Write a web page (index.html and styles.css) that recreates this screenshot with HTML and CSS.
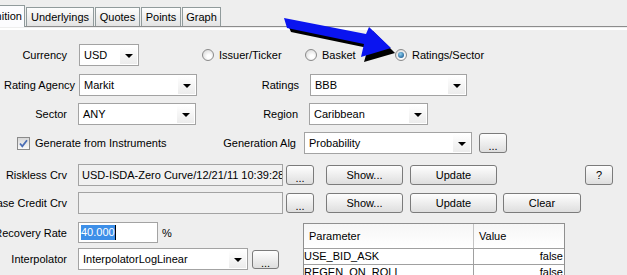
FILE: index.html
```html
<!DOCTYPE html>
<html lang="en">

<head>
    <link rel="stylesheet" href="styles.css">
</head>

<body>
    <div class="tabs">
        <div class="tab tab-selected">Definition</div>
        <div class="tab tab-underlyings">Underlyings</div>
        <div class="tab tab-quotes">Quotes</div>
        <div class="tab tab-points">Points</div>
        <div class="tab tab-graph">Graph</div>
    </div>
    <div class="panel">
        <div class="row row-1">
            <div class="lbl">Currency</div>
            <div class="combo combo-currency"><span class="combo-text">USD</span><span class="combo-btn"></span></div>
            <div class="radios">
                <div class="radio-item radio-issuer"><span class="radio"></span>Issuer/Ticker</div>
                <div class="radio-item radio-basket"><span class="radio"></span>Basket</div>
                <div class="radio-item"><span class="radio radio-on"></span>Ratings/Sector</div>
            </div>
        </div>
        <div class="row row-2">
            <div class="lbl lbl-wide">Rating Agency</div>
            <div class="combo combo-left"><span class="combo-text">Markit</span><span class="combo-btn"></span></div>
            <div class="lbl lbl-right">Ratings</div>
            <div class="combo combo-ratings"><span class="combo-text">BBB</span><span class="combo-btn"></span></div>
        </div>
        <div class="row row-3">
            <div class="lbl">Sector</div>
            <div class="combo combo-left"><span class="combo-text">ANY</span><span class="combo-btn"></span></div>
            <div class="lbl lbl-right">Region</div>
            <div class="combo combo-region"><span class="combo-text">Caribbean</span><span class="combo-btn"></span></div>
        </div>
        <div class="row row-4">
            <div class="check-group">
                <span class="checkbox">
                    <svg width="11" height="11" viewBox="0 0 11 11"><path d="M2 5.5 L4.3 8.3 L9 2.2" fill="none" stroke="#4a6db5" stroke-width="1.8"/></svg>
                </span>
                Generate from Instruments
            </div>
            <div class="lbl lbl-alg">Generation Alg</div>
            <div class="combo combo-alg"><span class="combo-text">Probability</span><span class="combo-btn"></span></div>
            <button class="btn btn-dots btn-alg">...</button>
        </div>
        <div class="row row-5">
            <div class="lbl">Riskless Crv</div>
            <div class="field field-curve">USD-ISDA-Zero Curve/12/21/11 10:39:28</div>
            <button class="btn btn-dots">...</button>
            <button class="btn btn-show">Show...</button>
            <button class="btn btn-update">Update</button>
            <button class="btn btn-help">?</button>
        </div>
        <div class="row row-6">
            <div class="lbl">Base Credit Crv</div>
            <div class="field field-curve"></div>
            <button class="btn btn-dots">...</button>
            <button class="btn btn-show">Show...</button>
            <button class="btn btn-update">Update</button>
            <button class="btn btn-clear">Clear</button>
        </div>
        <div class="bottom">
            <div class="bottom-left">
                <div class="row row-7">
                    <div class="lbl">Recovery Rate</div>
                    <div class="field field-rate"><span class="sel">40.000</span><span class="caret"></span></div>
                    <span class="pct">%</span>
                </div>
                <div class="row row-8">
                    <div class="lbl">Interpolator</div>
                    <div class="combo combo-interp"><span class="combo-text">InterpolatorLogLinear</span><span class="combo-btn"></span></div>
                    <button class="btn btn-dots btn-interp">...</button>
                </div>
            </div>
            <div class="params">
                <div class="params-head">
                    <div class="col-name">Parameter</div>
                    <div class="col-value">Value</div>
                </div>
                <div class="params-row">
                    <div class="col-name">USE_BID_ASK</div>
                    <div class="col-value">false</div>
                </div>
                <div class="params-row">
                    <div class="col-name">REGEN_ON_ROLL</div>
                    <div class="col-value">false</div>
                </div>
            </div>
        </div>
    </div>
    <!-- annotation arrow drawn over the screenshot -->
    <svg class="arrow" width="627" height="275" viewBox="0 0 627 275">
        <polygon points="287,23 369,38 373,31 395,53 364,62 368,48 291,32" fill="#000"/>
        <polygon points="284,18 366,34 369,27 391,48 361,57 364,44 287,28" fill="#0a14f0"/>
    </svg>
</body>

</html>
```

FILE: styles.css
```css
body {
    margin: 0;
    width: 627px;
    height: 275px;
    overflow: hidden;
    position: relative;
    background: #eeeeee;
    font-family: "Liberation Sans", Arial, sans-serif;
    font-size: 11px;
    color: #000;
}

/* tab strip */
.tabs {
    display: flex;
    align-items: flex-end;
    height: 26px;
    border-bottom: 1px solid #8c8c8c;
    margin-left: -27px;
}

.tab {
    height: 18px;
    line-height: 18px;
    border: 1px solid #919b9c;
    border-bottom: none;
    background: linear-gradient(#fdfdfd, #e3e3e3);
    text-align: center;
    margin-right: 1px;
    box-sizing: content-box;
}

.tab-selected {
    width: 50px;
    height: 21px;
    line-height: 21px;
    margin-bottom: -1px;
    background: #fcfcfe;
    border-color: #919b9c;
}

.tab-underlyings {
    width: 66px;
}

.tab-quotes {
    width: 43px;
}

.tab-points {
    width: 38px;
}

.tab-graph {
    width: 37px;
}

.panel {
    margin-top: 1px;
    border-top: 2px solid #fff;
    padding-top: 14px;
}

/* rows */
.row {
    display: flex;
    align-items: center;
    height: 22px;
}

.row-2 {
    margin-top: 8px;
}

.row-3,
.row-4 {
    margin-top: 7px;
}

.row-5 {
    margin-top: 10px;
}

.row-6 {
    margin-top: 6px;
}

.bottom {
    display: flex;
    margin-top: 8px;
}

.row-7 {
    height: 21px;
}

.row-8 {
    margin-top: 5px;
}

.lbl {
    width: 67px;
    flex-shrink: 0;
    display: flex;
    justify-content: flex-end;
    white-space: nowrap;
    margin-right: 11px;
}

.lbl-wide {
    width: 75px;
    margin-right: 4px;
}

.lbl-right {
    width: 102px;
    margin-right: 11px;
}

.lbl-alg {
    width: 99px;
    margin-right: 8px;
}

/* combo boxes */
.combo {
    display: flex;
    height: 22px;
    box-sizing: border-box;
    border: 1px solid #a3a3a3;
    background: #fff;
    padding: 1px;
}

.combo-currency {
    width: 60px;
    margin-left: 1px;
}

.combo-left {
    width: 118px;
}

.combo-ratings {
    width: 157px;
}

.combo-region {
    width: 119px;
}

.combo-alg {
    width: 168px;
}

.combo-interp {
    width: 170px;
}

.combo-text {
    flex: 1;
    line-height: 18px;
    padding-left: 3px;
    white-space: nowrap;
    overflow: hidden;
}

.combo-btn {
    width: 17px;
    position: relative;
    background: linear-gradient(#ffffff, #ececec);
}

.combo-btn::after {
    content: "";
    position: absolute;
    left: 5px;
    top: 8px;
    border-left: 4px solid transparent;
    border-right: 4px solid transparent;
    border-top: 4px solid #000;
}

/* radios */
.radios {
    display: flex;
    margin-left: 63px;
}

.radio-item {
    display: flex;
    align-items: center;
    white-space: nowrap;
}

.radio-issuer {
    width: 103px;
}

.radio-basket {
    width: 90px;
}

.radio {
    width: 10px;
    height: 10px;
    border: 1px solid #8a8a8a;
    border-radius: 50%;
    background: radial-gradient(circle at 60% 65%, #ffffff 20%, #d6d6d6 90%);
    margin-right: 5px;
    position: relative;
}

.radio-on::after {
    content: "";
    position: absolute;
    left: 2px;
    top: 2px;
    width: 6px;
    height: 6px;
    border-radius: 50%;
    background: radial-gradient(circle at 40% 35%, #8fd0f0, #1e5f96 80%);
}

/* checkbox */
.check-group {
    display: flex;
    align-items: center;
    width: 180px;
    padding-left: 17px;
    white-space: nowrap;
}

.checkbox {
    width: 11px;
    height: 11px;
    border: 1px solid #8a8a8a;
    background: linear-gradient(#d8d8d8, #fafafa);
    margin-right: 5px;
    display: flex;
}

/* text fields */
.field {
    height: 22px;
    box-sizing: border-box;
    border: 1px solid #a3a3a3;
    line-height: 20px;
    padding-left: 3px;
    white-space: nowrap;
    overflow: hidden;
}

.field-curve {
    width: 205px;
    background: #f1f1f1;
}

.field-rate {
    width: 80px;
    height: 21px;
    line-height: 18px;
    background: #fff;
    padding-left: 2px;
    display: flex;
    align-items: center;
}

.sel {
    background: #3d8fe8;
    color: #fff;
    line-height: 15px;
}

.caret {
    width: 1px;
    height: 15px;
    background: #000;
}

.pct {
    margin-left: 4px;
}

/* buttons */
.btn {
    height: 20px;
    box-sizing: border-box;
    border: 1px solid #7b7b7b;
    border-radius: 3px;
    background: linear-gradient(#fefefe, #dedede);
    font-family: "Liberation Sans", Arial, sans-serif;
    font-size: 11px;
    color: #000;
    padding: 0;
    margin-left: 7px;
}

.btn-dots {
    width: 28px;
    margin-left: 3px;
    line-height: 20px;
    padding-top: 2px;
}

.btn-alg {
    margin-left: 7px;
}

.btn-interp {
    width: 27px;
    height: 19px;
    margin-left: 4px;
}

.btn-show {
    width: 77px;
    margin-left: 12px;
}

.btn-update {
    width: 87px;
}

.btn-help {
    width: 28px;
    margin-left: 88px;
}

.btn-clear {
    width: 78px;
    margin-left: 6px;
}

/* parameters table */
.bottom-left {
    width: 303px;
}

.params {
    width: 262px;
    margin-top: 1px;
    border: 1px solid #8f8f8f;
    background: #fff;
    box-sizing: border-box;
    height: 60px;
}

.params-head {
    display: flex;
    height: 24px;
    background: linear-gradient(#f6f6f6, #ffffff);
    border-bottom: 1px solid #a0a0a0;
}

.params-head .col-name,
.params-head .col-value {
    line-height: 24px;
    padding-left: 5px;
}

.params-row {
    display: flex;
    height: 15px;
    line-height: 15px;
    border-bottom: 1px solid #a0a0a0;
}

.col-name {
    width: 170px;
    box-sizing: border-box;
    border-right: 1px solid #c4c4c4;
    white-space: nowrap;
}

.params-row .col-name {
    border-right-color: #a0a0a0;
}

.col-value {
    flex: 1;
}

.params-row .col-value {
    text-align: right;
    padding-right: 1px;
}

.arrow {
    position: absolute;
    left: 0;
    top: 0;
    pointer-events: none;
}
```
